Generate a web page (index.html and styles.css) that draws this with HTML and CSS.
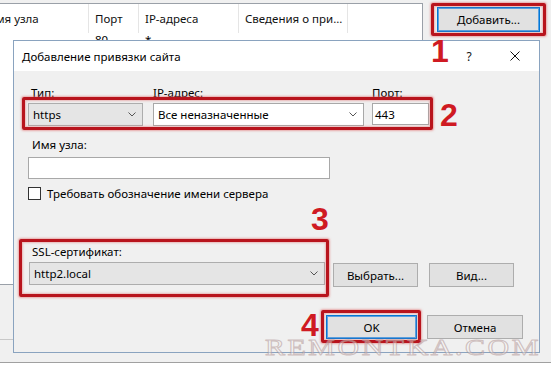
FILE: index.html
```html
<!DOCTYPE html>
<html lang="ru">
<head>
<meta charset="utf-8">
<title>Добавление привязки сайта</title>
<link rel="stylesheet" href="styles.css">
</head>
<body>
<div class="screen">
  <div class="bgwin">
    <div class="bg-main">
      <div class="left-col">
        <div class="listview">
          <div class="lv-header">
            <div class="lv-cell c1"><span class="cut">Имя узла</span></div>
            <div class="lv-cell c2">Порт</div>
            <div class="lv-cell c3">IP-адреса</div>
            <div class="lv-cell c4">Сведения о при...</div>
            <div class="lv-cell c5"></div>
          </div>
          <div class="lv-row">
            <div class="lv-val c1"></div>
            <div class="lv-val c2">80</div>
            <div class="lv-val c3">*</div>
          </div>
        </div>
        <div class="lower-line"></div>
      </div>
      <div class="side">
        <div class="btn btn-default btn-add">Добавить...</div>
      </div>
    </div>
  </div>

  <div class="dialog">
    <div class="titlebar">
      <div class="title">Добавление привязки сайта</div>
      <div class="caption-btns">
        <div class="cap-btn">?</div>
        <div class="cap-btn">
          <svg width="10" height="10" viewBox="0 0 10 10"><path d="M0.5 0.5 L9.5 9.5 M9.5 0.5 L0.5 9.5" stroke="#111" stroke-width="1" fill="none"/></svg>
        </div>
      </div>
    </div>
    <div class="body">
      <div class="grid3">
        <div class="lbl lbl-first">Тип:</div>
        <div class="lbl">IP-адрес:</div>
        <div class="lbl">Порт:</div>
        <div class="combo combo-ro w-type"><span>https</span>
          <svg class="chev" width="8" height="5" viewBox="0 0 8 5"><path d="M0.5 0.5 L4 4 L7.5 0.5" stroke="#555" stroke-width="1" fill="none"/></svg>
        </div>
        <div class="combo combo-edit w-ip"><span>Все неназначенные</span>
          <svg class="chev" width="8" height="5" viewBox="0 0 8 5"><path d="M0.5 0.5 L4 4 L7.5 0.5" stroke="#555" stroke-width="1" fill="none"/></svg>
        </div>
        <div class="textbox w-port">443</div>
      </div>

      <div class="lbl lbl-host">Имя узла:</div>
      <div class="textbox w-host"></div>

      <div class="check-row">
        <div class="checkbox"></div>
        <div class="check-label">Требовать обозначение имени сервера</div>
      </div>

      <div class="lbl lbl-ssl">SSL-сертификат:</div>
      <div class="ssl-row">
        <div class="combo combo-ro w-ssl"><span>http2.local</span>
          <svg class="chev" width="8" height="5" viewBox="0 0 8 5"><path d="M0.5 0.5 L4 4 L7.5 0.5" stroke="#555" stroke-width="1" fill="none"/></svg>
        </div>
        <div class="btn btn-pick">Выбрать...</div>
        <div class="btn btn-view">Вид...</div>
      </div>

      <div class="footer">
        <div class="btn btn-default btn-ok">OK</div>
        <div class="btn btn-cancel">Отмена</div>
      </div>
    </div>
  </div>

  <div class="mark mark-1"></div>
  <div class="mark mark-2"></div>
  <div class="mark mark-3"></div>
  <div class="mark mark-4"></div>
  <div class="num num-1">1</div>
  <div class="num num-2">2</div>
  <div class="num num-3">3</div>
  <div class="num num-4">4</div>

  <div class="watermark">REMONTKA.COM</div>
</div>
</body>
</html>
```

FILE: styles.css
```css
* { box-sizing: border-box; }

html, body {
  margin: 0;
  padding: 0;
  background: #ffffff;
}

.screen {
  position: relative;
  width: 551px;
  height: 365px;
  overflow: hidden;
  font-family: "Segoe UI", "Noto Sans", sans-serif;
  font-size: 11.5px;
  color: #000;
}

/* ---------- background window ---------- */
.bgwin {
  height: 363px;
  background: #f0f0f0;
  border-bottom: 1px solid #a0a0a0;
  padding-top: 3px;
}

.bg-main {
  display: flex;
}

.left-col {
  width: 423px;
}

.listview {
  height: 282px;
  background: #fff;
  border-top: 1px solid #9aa0a8;
  border-right: 1px solid #9aa0a8;
  border-bottom: 1px solid #9aa0a8;
}

.lv-header {
  display: flex;
  height: 29px;
  align-items: stretch;
}

.lv-cell {
  border-right: 1px solid #e5e5e5;
  display: flex;
  align-items: center;
  padding-left: 6px;
  white-space: nowrap;
  overflow: hidden;
  color: #111;
}

.lv-cell.c1 { width: 89px; padding-left: 0; }
.lv-cell.c2 { width: 50px; }
.lv-cell.c3 { width: 100px; }
.lv-cell.c4 { width: 109px; }
.lv-cell.c5 { flex: 1; border-right: none; }

.cut { margin-left: -13px; }

.lv-row {
  display: flex;
  height: 14px;
  align-items: flex-end;
  overflow: hidden;
}

.lv-val { padding-left: 6px; line-height: 14px; }
.lv-val.c1 { width: 89px; }
.lv-val.c2 { width: 50px; }
.lv-val.c3 { width: 100px; }

.lower-line {
  margin-top: 54px;
  border-top: 1px solid #c8c8c8;
  width: 13px;
}

.side {
  padding: 4px 0 0 14px;
}

/* ---------- buttons ---------- */
.btn {
  background: #e1e1e1;
  border: 1px solid #adadad;
  display: flex;
  align-items: center;
  justify-content: center;
  color: #000;
}

.btn-default {
  border: 1px solid #0078d7;
  box-shadow: inset 0 0 0 1px #5aa0e0;
}

.btn-add { width: 103px; height: 25px; }

/* ---------- dialog ---------- */
.dialog {
  position: absolute;
  left: 13px;
  top: 40px;
  width: 527px;
  height: 313px;
  border: 1px solid #8aa3bf;
  background: #f0f0f0;
}

.titlebar {
  height: 30px;
  background: #fff;
  display: flex;
  align-items: center;
  padding-left: 8px;
}

.title { color: #000; }

.caption-btns {
  margin-left: auto;
  margin-right: 1px;
  display: flex;
  height: 30px;
}

.cap-btn {
  width: 46px;
  height: 30px;
  display: flex;
  align-items: center;
  justify-content: center;
  font-size: 12px;
  color: #111;
}

.body {
  padding: 14px 16px 0 14px;
}

.grid3 {
  display: grid;
  grid-template-columns: 125px 219px 57px;
  grid-template-rows: 16px 23px;
  row-gap: 2px;
}

.lbl {
  height: 16px;
  line-height: 16px;
  white-space: nowrap;
}

.lbl-first { padding-left: 3px; }

.combo {
  height: 23px;
  border: 1px solid #adadad;
  display: flex;
  align-items: center;
  padding-left: 4px;
  padding-right: 6px;
}

.combo span { flex: 1; white-space: nowrap; }

.combo-ro { background: #e5e5e5; }
.combo-edit { background: #fff; border-color: #a8a8a8; }

.chev { display: block; }

.w-type { width: 115px; }
.w-ip { width: 211px; }

.textbox {
  background: #fff;
  border: 1px solid #a8a8a8;
  display: flex;
  align-items: center;
  padding-left: 2px;
}

.w-port { width: 57px; height: 22px; }

.lbl-host {
  margin-top: 11px;
  padding-left: 4px;
}

.w-host {
  margin-top: 4px;
  width: 302px;
  height: 22px;
}

.check-row {
  margin-top: 8px;
  display: flex;
  align-items: center;
  height: 13px;
}

.checkbox {
  width: 13px;
  height: 13px;
  border: 1px solid #333;
  background: #fff;
}

.check-label {
  margin-left: 6px;
  white-space: nowrap;
}

.lbl-ssl {
  margin-top: 44px;
  padding-left: 4px;
}

.ssl-row {
  margin-top: 2px;
  display: flex;
  align-items: flex-start;
}

.w-ssl {
  margin-left: 1px;
  width: 296px;
}

.btn-pick {
  margin-top: 1px;
  margin-left: 8px;
  width: 85px;
  height: 24px;
}

.btn-view {
  margin-top: 1px;
  margin-left: 11px;
  width: 85px;
  height: 24px;
}

.footer {
  margin-top: 28px;
  display: flex;
  justify-content: flex-end;
}

.btn-ok { width: 91px; height: 24px; }
.btn-cancel { width: 96px; height: 24px; margin-left: 10px; }

/* ---------- annotations ---------- */
.mark {
  position: absolute;
  border: 3px solid #b8141d;
  border-radius: 2px;
  box-shadow: 0 0 2px 1px rgba(225, 110, 110, 0.55), inset 0 0 2px 1px rgba(225, 110, 110, 0.45);
}

.mark-1 { left: 431px; top: 3px; width: 115px; height: 33px; }
.mark-2 { left: 22px; top: 97px; width: 411px; height: 33px; }
.mark-3 { left: 19px; top: 239px; width: 310px; height: 58px; }
.mark-4 { left: 321px; top: 310px; width: 100px; height: 33px; }

.num {
  position: absolute;
  font-family: "Liberation Sans", Arial, sans-serif;
  font-weight: bold;
  font-size: 32px;
  line-height: 32px;
  color: #cf1a22;
}

.num-1 { left: 431px; top: 35px; }
.num-2 { left: 440px; top: 99px; }
.num-3 { left: 311px; top: 203px; }
.num-4 { left: 301px; top: 309px; }

.watermark {
  position: absolute;
  left: 265px;
  top: 335px;
  font-family: "Liberation Serif", "Times New Roman", serif;
  font-size: 24px;
  line-height: 24px;
  letter-spacing: 2px;
  transform: scaleX(1.25);
  transform-origin: left top;
  color: rgba(255, 255, 255, 0.4);
  -webkit-text-stroke: 1px rgba(170, 140, 140, 0.5);
  white-space: nowrap;
}
```
